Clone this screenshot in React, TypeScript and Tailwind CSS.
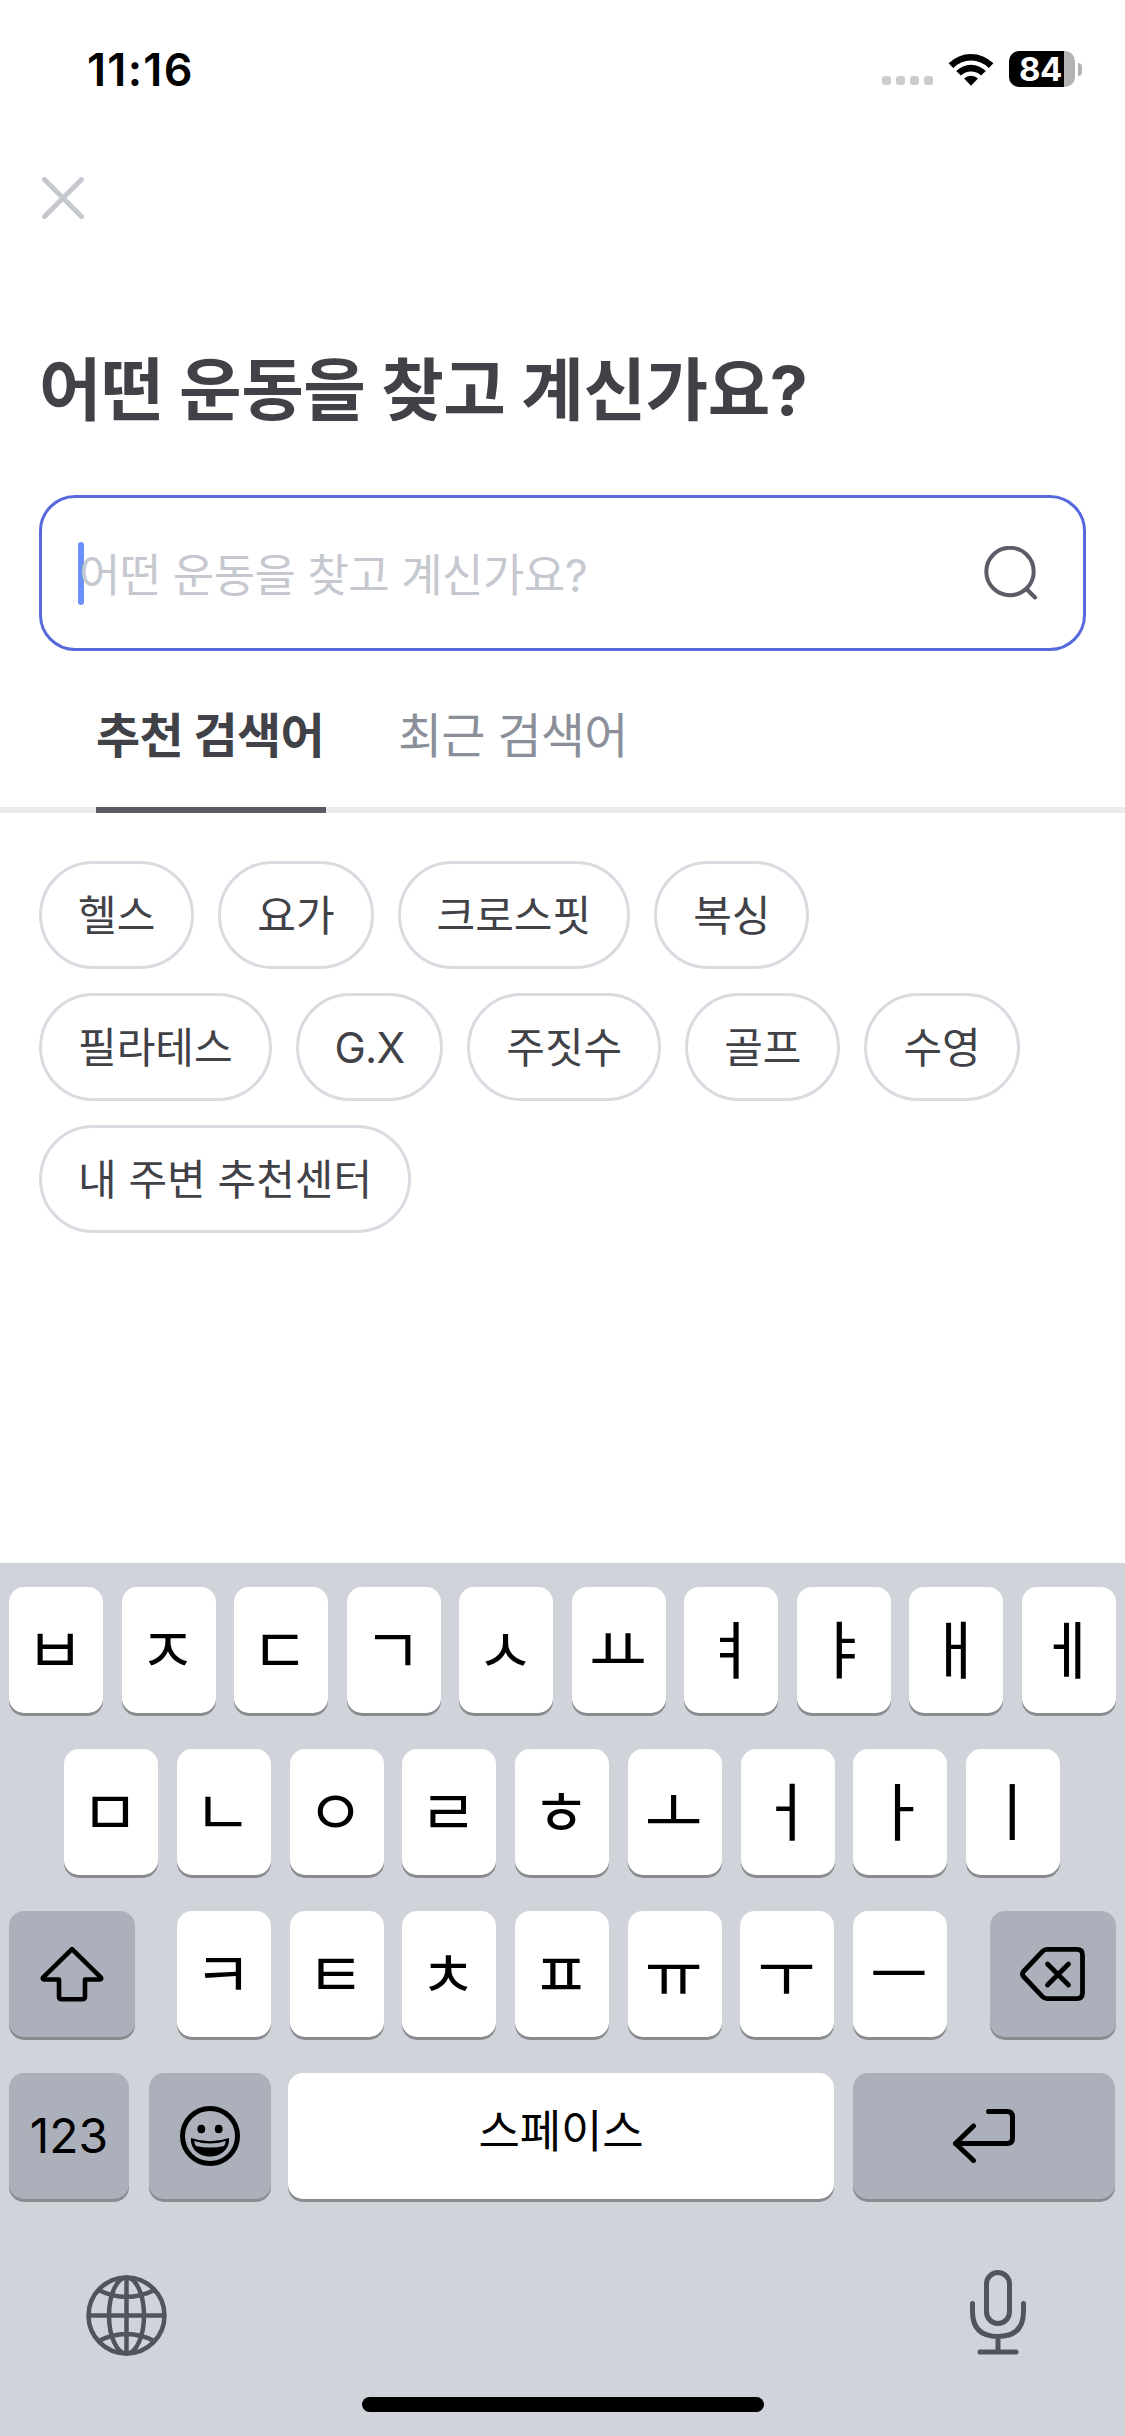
import React from "react";

const chipRows = [
  ["헬스", "요가", "크로스핏", "복싱"],
  ["필라테스", "G.X", "주짓수", "골프", "수영"],
  ["내 주변 추천센터"],
];

const keyRow1 = ["ㅂ", "ㅈ", "ㄷ", "ㄱ", "ㅅ", "ㅛ", "ㅕ", "ㅑ", "ㅐ", "ㅔ"];
const keyRow2 = ["ㅁ", "ㄴ", "ㅇ", "ㄹ", "ㅎ", "ㅗ", "ㅓ", "ㅏ", "ㅣ"];
const keyRow3 = ["ㅋ", "ㅌ", "ㅊ", "ㅍ", "ㅠ", "ㅜ", "ㅡ"];

const keyBase =
  "flex h-[126px] shrink-0 items-center justify-center rounded-[15px] shadow-[0_3px_0_#898b8f]";

const LetterKey: React.FC<{ label: string }> = ({ label }) => (
  <button className={`${keyBase} w-[94px] bg-white pr-[2px] pb-[9px] font-['Noto_Sans_CJK_KR',sans-serif] text-[63px] leading-none font-normal`}>
    {label}
  </button>
);

const StatusBar: React.FC = () => (
  <div className="flex h-[138px] items-center justify-between pr-[43px] pl-[87px]">
    <span className="text-[45px] leading-none font-semibold tracking-[1.3px] text-black">
      11:16
    </span>
    <div className="flex items-center">
      <div className="flex gap-[5px] pt-[23px]">
        <span className="size-[9px] rounded-[3px] bg-[#cccccc]" />
        <span className="size-[9px] rounded-[3px] bg-[#cccccc]" />
        <span className="size-[9px] rounded-[3px] bg-[#cccccc]" />
        <span className="size-[9px] rounded-[3px] bg-[#cccccc]" />
      </div>
      <svg className="ml-[15px] h-[33px] w-[46px]" viewBox="0 0 46 33">
        <path d="M0.6 10.2a32 32 0 0 1 44.800 0l-4.600 4.700a25.400 25.400 0 0 0-35.600 0z" />
        <path d="M8.200 17.900a21 21 0 0 1 29.600 0l-4.700 4.700a14.300 14.300 0 0 0-20.200 0z" />
        <path d="M16 25.600a10 10 0 0 1 14 0l-7 7.200z" />
      </svg>
      <div className="ml-[15px] flex h-9 w-[66px] items-center rounded-[10px] bg-[linear-gradient(90deg,#000_55px,#b3b3b3_55px)] pl-[10px]">
        <span className="text-[33px] leading-9 font-bold tracking-[-0.5px] text-white">84</span>
      </div>
      <div className="ml-[3px] h-[13px] w-1 rounded-r-full bg-[#b3b3b3]" />
    </div>
  </div>
);

const App: React.FC = () => {
  return (
    <div className="flex h-[2436px] w-[1125px] flex-col overflow-hidden bg-white font-['Inter','Noto_Sans_CJK_KR',sans-serif] text-[#414148]">
      <StatusBar />

      {/* Close */}
      <button className="mt-[39px] ml-[42px] size-[42px]">
        <svg viewBox="0 0 42 42" fill="none" stroke="#c6c8d0" strokeWidth="5" strokeLinecap="round">
          <path d="M2.500 2.500l37 37M39.500 2.500l-37 37" />
        </svg>
      </button>

      <h1 className="mt-[121px] ml-[39px] h-[100px] text-[68px] leading-[100px] font-bold tracking-[-0.4px] whitespace-nowrap">
        어떤 운동을 찾고 계신가요?
      </h1>

      {/* Search field */}
      <div className="mx-[39px] mt-[55px] flex h-[156px] shrink-0 items-center justify-between rounded-[36px] border-3 border-[#5669dd] pr-[45px] pl-9">
        <div className="flex items-center">
          <span className="h-[63px] w-[6px] rounded-full bg-[#6b8ffb]" />
          <span className="-ml-[5px] pt-1 text-[45px] leading-none tracking-[-0.55px] whitespace-nowrap text-[#c6c8d0]">
            어떤 운동을 찾고 계신가요?
          </span>
        </div>
        <svg className="size-[54px]" viewBox="0 0 54 54" fill="none" stroke="#5c5c66" strokeWidth="4" strokeLinecap="round">
          <circle cx="26" cy="25.500" r="23.700" />
          <path d="M43 43.500l8 8" />
        </svg>
      </div>

      {/* Tabs */}
      <div className="flex h-[162px] shrink-0 gap-[72px] border-b-6 border-[#ececee] pl-24 text-[48px] leading-[68px] whitespace-nowrap">
        <button className="flex h-[162px] w-[230px] border-b-6 border-[#5a5a64] pt-[51px] font-bold tracking-[-0.7px]">
          추천 검색어
        </button>
        <button className="flex h-[162px] pt-[51px] tracking-[-0.8px] text-[#8b8f99]">
          최근 검색어
        </button>
      </div>

      {/* Suggested keywords */}
      <div className="mt-12 flex flex-col gap-6 px-[39px]">
        {chipRows.map((row) => (
          <div key={row[0]} className="flex gap-6">
            {row.map((chip) => (
              <button
                key={chip}
                className="flex h-[108px] items-center rounded-full border-3 border-[#dadbe1] px-9 pt-[1px] text-[42px] leading-none whitespace-nowrap"
              >
                {chip === "G.X" ? <span className="tracking-[-0.8px]">{chip}</span> : chip}
              </button>
            ))}
          </div>
        ))}
      </div>

      {/* Keyboard */}
      <div className="mt-auto flex h-[873px] shrink-0 flex-col bg-[#d0d3da] px-[9px] pt-6 text-black">
        <div className="flex justify-between">
          {keyRow1.map((key) => (
            <LetterKey key={key} label={key} />
          ))}
        </div>
        <div className="mt-9 flex justify-between pr-14 pl-[55px]">
          {keyRow2.map((key) => (
            <LetterKey key={key} label={key} />
          ))}
        </div>
        <div className="mt-9 flex">
          <button className={`${keyBase} w-[126px] bg-[#abb0bb]`}>
            <svg className="h-[56px] w-[64px]" viewBox="0 0 64 56" fill="none" stroke="#000" strokeWidth="4.6" strokeLinejoin="round">
              <path d="M32 3.200L3.200 31.300q-1.200 2 1.200 2.200H19v17q0 2.800 2.800 2.800h20.400q2.800 0 2.800-2.800v-17h14.600q2.400-.2 1.200-2.200z" />
            </svg>
          </button>
          <div className="ml-[42px] flex w-[770px] justify-between">
            {keyRow3.map((key) => (
              <LetterKey key={key} label={key} />
            ))}
          </div>
          <button className={`${keyBase} ml-[43px] w-[126px] bg-[#abb0bb] pr-[2px]`}>
            <svg className="h-[54px] w-[65px]" viewBox="0 0 65 54" fill="none" stroke="#000" strokeWidth="4.8" strokeLinecap="round" strokeLinejoin="round">
              <path d="M27 2.400h30q5.500 0 5.500 5.500v38.200q0 5.500-5.500 5.500H27q-2.500 0-4.500-2L3.500 29.500q-2-2.500 0-5L22.500 4.400q2-2 4.500-2z" />
              <path d="M27.500 17l21 21M48.500 17l-21 21" />
            </svg>
          </button>
        </div>
        <div className="mt-9 flex">
          <button className={`${keyBase} w-[120px] bg-[#abb0bb] text-[48px]`}>
            123
          </button>
          <button className={`${keyBase} ml-5 w-[122px] bg-[#abb0bb]`}>
            <svg className="size-[60px]" viewBox="0 0 60 60">
              <circle cx="30" cy="30" r="27.500" fill="none" stroke="#000" strokeWidth="5" />
              <ellipse cx="21.300" cy="23" rx="3.900" ry="4.300" />
              <ellipse cx="38.700" cy="23" rx="3.900" ry="4.300" />
              <path d="M11 32q19 6.500 38 0c1 10-7 18.500-19 18.500S10 42 11 32z" />
              <path d="M14.200 35q15.800 5 31.600 0-.5 3-1.800 5-14 3-28 0-1.300-2-1.800-5z" fill="#abb0bb" />
            </svg>
          </button>
          <button className={`${keyBase} ml-[17px] w-[546px] bg-white pb-2 text-[45px] tracking-[-0.2px]`}>
            스페이스
          </button>
          <button className={`${keyBase} ml-[19px] w-[262px] bg-[#abb0bb]`}>
            <svg className="h-[54px] w-[62px]" viewBox="0 0 62 54" fill="none" stroke="#000" strokeWidth="5" strokeLinecap="round" strokeLinejoin="round">
              <path d="M35.500 2.500h18.500q5.500 0 5.500 5.500v21q0 5.500-5.500 5.500H2.500" />
              <path d="M20.500 17l-18 17.500 18 17" />
            </svg>
          </button>
        </div>

        <div className="mt-[71px] flex items-start justify-between pr-[90px] pl-[77px]">
          <svg className="mt-[5px] size-[81px]" viewBox="0 0 81 81" fill="none" stroke="#50555c" strokeWidth="4.5">
            <circle cx="40.500" cy="40.500" r="38" />
            <ellipse cx="40.500" cy="40.500" rx="17.500" ry="38" />
            <path d="M40.500 2v77M2 40.500h77M12.500 15q28 14 56 0M12.500 66q28-14 56 0" />
          </svg>
          <svg className="h-[86px] w-[56px]" viewBox="0 0 56 86" fill="none" stroke="#50555c" strokeWidth="5" strokeLinecap="round">
            <rect x="16.500" y="2.500" width="23" height="51" rx="11.500" />
            <path d="M2.500 33.500v8q0 25 25.500 25t25.500-25v-8M28 67v14M10 82h36" />
          </svg>
        </div>

        {/* Home indicator */}
        <div className="mt-auto mb-6 ml-[353px] h-[15px] w-[402px] rounded-full bg-black" />
      </div>
    </div>
  );
};

export default App;
